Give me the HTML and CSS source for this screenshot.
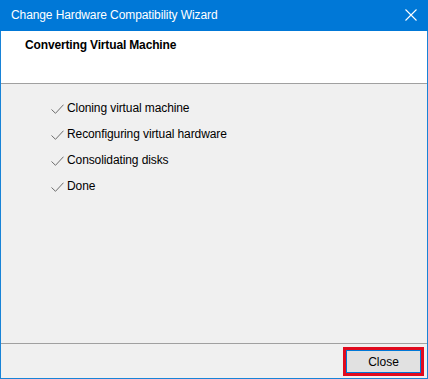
FILE: index.html
```html
<!DOCTYPE html>
<html>
<head>
<meta charset="utf-8">
<link rel="stylesheet" href="styles.css">
</head>
<body>
<div class="window">
  <div class="titlebar">
    <span class="title">Change Hardware Compatibility Wizard</span>
    <svg class="close-x" width="12" height="12" viewBox="0 0 12 12"><path d="M0.5 0.5 L11.5 11.5 M11.5 0.5 L0.5 11.5" stroke="#fff" stroke-width="1.1" fill="none"/></svg>
  </div>
  <div class="header">
    <div class="heading">Converting Virtual Machine</div>
  </div>
  <div class="content">
    <ul class="steps">
      <li class="step"><svg class="check" width="13" height="10" viewBox="0 0 13 10"><path d="M0.5 5.5 L4.5 9.3 L12.5 0.7" stroke="#6d6d6d" stroke-width="1" fill="none"/></svg><span>Cloning virtual machine</span></li>
      <li class="step"><svg class="check" width="13" height="10" viewBox="0 0 13 10"><path d="M0.5 5.5 L4.5 9.3 L12.5 0.7" stroke="#6d6d6d" stroke-width="1" fill="none"/></svg><span>Reconfiguring virtual hardware</span></li>
      <li class="step"><svg class="check" width="13" height="10" viewBox="0 0 13 10"><path d="M0.5 5.5 L4.5 9.3 L12.5 0.7" stroke="#6d6d6d" stroke-width="1" fill="none"/></svg><span>Consolidating disks</span></li>
      <li class="step"><svg class="check" width="13" height="10" viewBox="0 0 13 10"><path d="M0.5 5.5 L4.5 9.3 L12.5 0.7" stroke="#6d6d6d" stroke-width="1" fill="none"/></svg><span>Done</span></li>
    </ul>
  </div>
  <div class="footer">
    <button class="btn">Close</button>
  </div>
</div>
</body>
</html>
```
FILE: styles.css
```css
html, body {
  margin: 0;
  padding: 0;
  background: #ffffff;
}
.window {
  box-sizing: border-box;
  width: 428px;
  height: 379px;
  border: 1px solid #1883d7;
  border-top: none;
  background: #f0f0f0;
  display: flex;
  flex-direction: column;
  font-family: "Liberation Sans", Arial, sans-serif;
  font-size: 12px;
  color: #000;
}
.titlebar {
  height: 31px;
  margin: 0 -1px;
  background: #0078d7;
  display: flex;
  align-items: center;
  justify-content: space-between;
  padding: 0 11px 0 11px;
  box-sizing: border-box;
  flex-shrink: 0;
}
.title {
  color: #fff;
  font-size: 12px;
  letter-spacing: -0.1px;
  padding-bottom: 1px;
}
.close-x {
  display: block;
  margin-bottom: 1px;
}
.header {
  height: 52px;
  background: #fff;
  border-bottom: 1px solid #a0a0a0;
  flex-shrink: 0;
}
.heading {
  font-weight: bold;
  padding: 7px 0 0 24px;
  font-size: 12px;
  letter-spacing: -0.15px;
}
.content {
  flex: 1;
  min-height: 0;
}
.steps {
  list-style: none;
  margin: 0;
  padding: 11px 0 0 50px;
}
.step {
  display: flex;
  align-items: center;
  height: 26px;
  gap: 3px;
  letter-spacing: -0.1px;
}
.check {
  display: block;
  margin-top: 1px;
}
.footer {
  box-sizing: border-box;
  height: 35px;
  border-top: 1px solid #a0a0a0;
  flex-shrink: 0;
  display: flex;
  justify-content: flex-end;
  align-items: flex-start;
  padding: 3px 3px 0 0;
}
.btn {
  box-sizing: border-box;
  width: 81px;
  height: 29px;
  border: 3px solid #e00a1e;
  outline: 1px solid #0078d7;
  outline-offset: -4px;
  background: #e1e1e1;
  font-family: "Liberation Sans", Arial, sans-serif;
  font-size: 12px;
  color: #000;
  padding: 0;
  margin: 0;
}
```
